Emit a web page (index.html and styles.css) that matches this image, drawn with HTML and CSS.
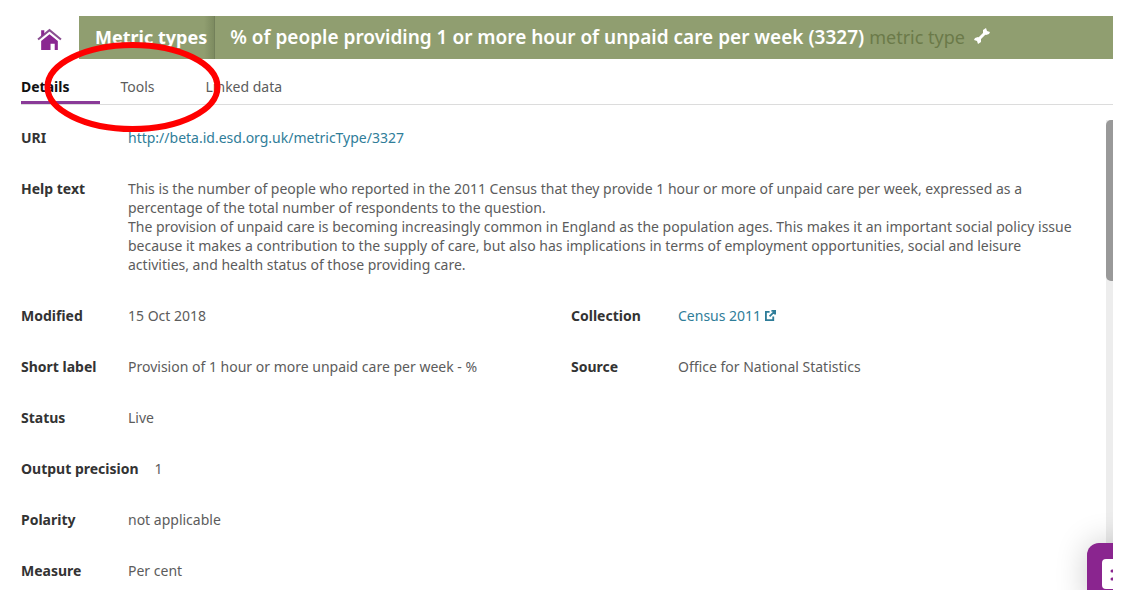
FILE: index.html
```html
<!DOCTYPE html>
<html lang="en">
<head>
<meta charset="utf-8">
<title>Metric type 3327</title>
<link rel="stylesheet" href="styles.css">
</head>
<body>
<div class="app">
  <header class="header">
    <a class="home" href="#" aria-label="Home">
      <svg class="home-icon" viewBox="0 0 24 22" aria-hidden="true">
        <path class="home-body" d="M4 12.500 12 6l8 6.500V21h-3v-6h-4v6H4z"/>
        <path class="home-roof" d="M1 11 12 2l11 9"/>
        <path class="home-body" d="M4 2h3v4L4 8z"/>
      </svg>
    </a>
    <nav class="crumbs">
      <a class="crumb" href="#">Metric types</a>
      <h1 class="title">% of people providing 1 or more hour of unpaid care per week (3327) <span class="kind">metric type</span></h1>
      <button class="tool" aria-label="Settings">
        <svg class="tool-icon" viewBox="0 0 18 18" aria-hidden="true">
          <path class="tool-bar" d="M5 13 13 5"/>
          <path class="tool-end" d="M10 6V3l3-2 1 3 3 1-1 2-3 1zM8 12v3l-3 2-1-3-3-1 1-2 3-1z"/>
        </svg>
      </button>
    </nav>
  </header>
  <nav class="tabs">
    <a class="tab tab-active" href="#">Details</a>
    <a class="tab" href="#">Tools</a>
    <a class="tab" href="#">Linked data</a>
  </nav>
  <main class="content">
    <dl class="fields">
      <div class="field wide"><dt>URI</dt><dd><a class="link" href="#">http://beta.id.esd.org.uk/metricType/3327</a></dd></div>
      <div class="field wide"><dt>Help text</dt><dd>This is the number of people who reported in the 2011 Census that they provide 1 hour or more of unpaid care per week, expressed as a percentage of the total number of respondents to the question.<br>The provision of unpaid care is becoming increasingly common in England as the population ages. This makes it an important social policy issue because it makes a contribution to the supply of care, but also has implications in terms of employment opportunities, social and leisure activities, and health status of those providing care.</dd></div>
      <div class="field"><dt>Modified</dt><dd>15 Oct 2018</dd></div>
      <div class="field"><dt>Collection</dt><dd><a class="link" href="#">Census 2011
        <svg class="external" viewBox="0 0 12 12" aria-hidden="true"><path d="M5 2H1v9h8V7M5 7l5-5M7 1h4v4"/></svg></a></dd></div>
      <div class="field"><dt>Short label</dt><dd>Provision of 1 hour or more unpaid care per week - %</dd></div>
      <div class="field"><dt>Source</dt><dd>Office for National Statistics</dd></div>
      <div class="field wide"><dt>Status</dt><dd>Live</dd></div>
      <div class="field wide"><dt>Output precision</dt><dd>1</dd></div>
      <div class="field wide"><dt>Polarity</dt><dd>not applicable</dd></div>
      <div class="field wide"><dt>Measure</dt><dd>Per cent</dd></div>
    </dl>
    <div class="track"><div class="thumb"></div></div>
  </main>
  <button class="chat" aria-label="Chat">
    <svg class="chat-icon" viewBox="0 0 32 32" aria-hidden="true">
      <rect class="chat-box" width="32" height="30" rx="4"/>
      <path class="chat-dots" d="M10 12h13M10 20h13"/>
    </svg>
  </button>
  <svg class="marker" viewBox="0 0 176 90" aria-hidden="true"><ellipse cx="88" cy="45" rx="85" ry="42"/></svg>
</div>
</body>
</html>
```
FILE: styles.css
```css
* { box-sizing: border-box; }

body {
  margin: 0;
  padding: 16px 13px 15px 0;
  height: 100vh;
  background: #fff;
  color: #5c5c5c;
  font: 14px/19px "Noto Sans", "Open Sans", sans-serif;
}

a { color: inherit; text-decoration: none; }
button { border: 0; padding: 0; background: none; cursor: pointer; }
svg { display: block; }

.app {
  position: relative;
  display: flex;
  flex-direction: column;
  height: 100%;
  overflow: hidden;
}

.header { display: flex; flex: none; height: 43px; }
.home {
  display: flex;
  flex: none;
  align-items: center;
  justify-content: center;
  width: 79px;
  padding: 4px 0 0 20px;
}
.home-icon { width: 25px; height: 23px; }
.home-body { fill: #8a2791; }
.home-roof { fill: none; stroke: #8a4f91; stroke-width: 2; }

.crumbs {
  display: flex;
  flex: 1;
  min-width: 0;
  background: #909e70;
  color: #fff;
  font-size: 18px;
  line-height: 42px;
  white-space: nowrap;
}
.crumb {
  padding: 0 7px 0 16px;
  border-right: 1px solid #73805a;
  background: linear-gradient(to left, #7d8b60, #909e70 10px);
  font-weight: 700;
}
.title { margin: 0; padding-left: 15px; font-size: 19px; font-weight: 600; }
.kind { color: #6b7a49; font-size: 18px; font-weight: 400; }
.tool { display: flex; align-items: center; padding: 0 0 3px 8px; }
.tool-icon { width: 18px; height: 18px; }
.tool-bar { stroke: #fff; stroke-width: 3; }
.tool-end { fill: #fff; }

.tabs {
  display: flex;
  flex: none;
  gap: 20px;
  height: 46px;
  margin-left: 21px;
  border-bottom: 1px solid #dcdcdc;
}
.tab { padding: 18px 31px 0 0; }
.tab-active {
  border-bottom: 3px solid #8a3a98;
  color: #111;
  font-weight: 700;
}

.content { display: flex; flex: 1; min-height: 0; overflow: hidden; }
.fields {
  display: grid;
  flex: 1;
  grid-template-columns: 1fr 1fr;
  align-content: start;
  gap: 32px 20px;
  margin: 0;
  padding: 23px 5px 0 21px;
}
.field { display: flex; }
.wide { grid-column: 1 / -1; padding-right: 20px; }
dt {
  flex: none;
  min-width: 107px;
  padding-right: 16px;
  color: #333;
  font-weight: 700;
  white-space: nowrap;
}
dd { margin: 0; }
.link { color: #2f7d99; }
.external {
  display: inline-block;
  width: 11px;
  height: 11px;
  fill: none;
  stroke: currentColor;
  stroke-width: 2;
}

.track { flex: none; width: 7px; margin-top: 15px; background: #ededed; }
.thumb { height: 161px; border-radius: 5px 0 0 5px; background: #999; }

.chat {
  position: absolute;
  right: -38px;
  bottom: -17px;
  width: 64px;
  height: 64px;
  padding: 15px;
  border-radius: 12px;
  background: #8a258f;
  box-shadow: 0 0 32px rgba(0, 0, 0, 0.2);
}
.chat-icon { width: 32px; height: 32px; }
.chat-box { fill: #fff; }
.chat-dots { stroke: #8a258f; stroke-width: 3; stroke-linecap: round; }

.marker { position: absolute; left: 44px; top: 26px; width: 177px; height: 90px; pointer-events: none; }
.marker ellipse { fill: none; stroke: #f00; stroke-width: 6; }
```
